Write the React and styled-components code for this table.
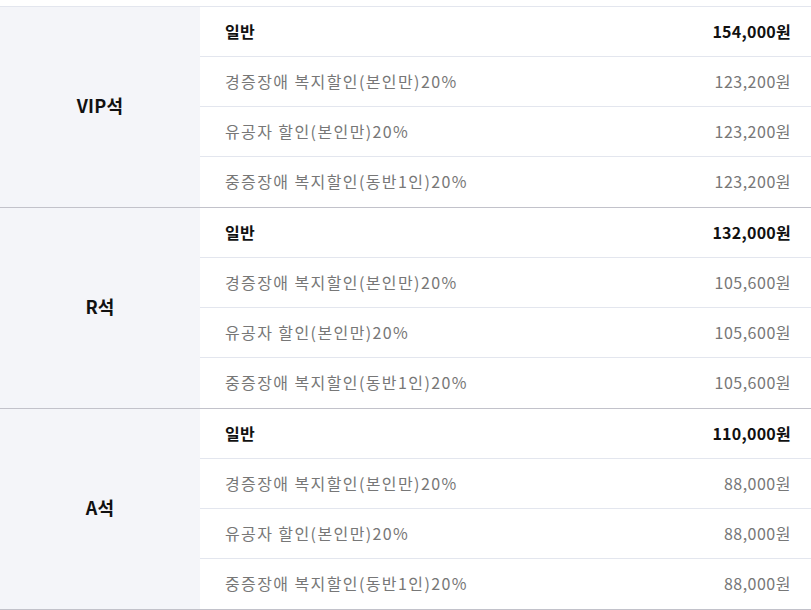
import React from "react";
import styled, { createGlobalStyle } from "styled-components";

const Global = createGlobalStyle`
  html, body { margin: 0; padding: 0; background: #fff; }
  body { font-family: "Noto Sans CJK KR", "Noto Sans", sans-serif; }
`;

const Page = styled.div`
  padding-top: 6px;
  width: 811px;
`;

const Table = styled.div`
  border-top: 1px solid #e3e6ee;
  display: flex;
  flex-direction: column;
`;

const Group = styled.div`
  display: grid;
  grid-template-columns: 200px 1fr;
  border-bottom: 1px solid #c2c2ca;
`;

const Seat = styled.div`
  background: #f4f5f9;
  display: flex;
  align-items: center;
  justify-content: center;
  padding-bottom: 4px;
  font-size: 18px;
  font-weight: 700;
  color: #111;
  letter-spacing: 0.2px;
`;

const Rows = styled.div`
  display: flex;
  flex-direction: column;
`;

const Row = styled.div`
  box-sizing: border-box;
  height: 50px;
  display: flex;
  align-items: center;
  justify-content: space-between;
  padding: 0 20px 2px 25px;
  border-bottom: 1px solid #e3e6ee;
  font-size: 16px;
  color: ${(p) => (p.$main ? "#111" : "#777")};
  font-weight: ${(p) => (p.$main ? 700 : 400)};
  &:last-child { border-bottom: none; }
`;

const Label = styled.span`
  letter-spacing: ${(p) => (p.$main ? "0.3px" : "1.4px")};
`;

const Price = styled.span`
  letter-spacing: ${(p) => (p.$main ? "0.25px" : "0.5px")};
`;

const data = [
  { seat: "VIP석", prices: ["154,000", "123,200", "123,200", "123,200"] },
  { seat: "R석", prices: ["132,000", "105,600", "105,600", "105,600"] },
  { seat: "A석", prices: ["110,000", "88,000", "88,000", "88,000"] },
];

const labels = [
  "일반",
  "경증장애 복지할인(본인만)20%",
  "유공자 할인(본인만)20%",
  "중증장애 복지할인(동반1인)20%",
];

export default function App() {
  return (
    <Page>
      <Global />
      <Table>
        {data.map((g) => (
          <Group key={g.seat}>
            <Seat>{g.seat}</Seat>
            <Rows>
              {labels.map((l, i) => (
                <Row key={l} $main={i === 0}>
                  <Label $main={i === 0}>{l}</Label>
                  <Price $main={i === 0}>{g.prices[i]}원</Price>
                </Row>
              ))}
            </Rows>
          </Group>
        ))}
      </Table>
    </Page>
  );
}
